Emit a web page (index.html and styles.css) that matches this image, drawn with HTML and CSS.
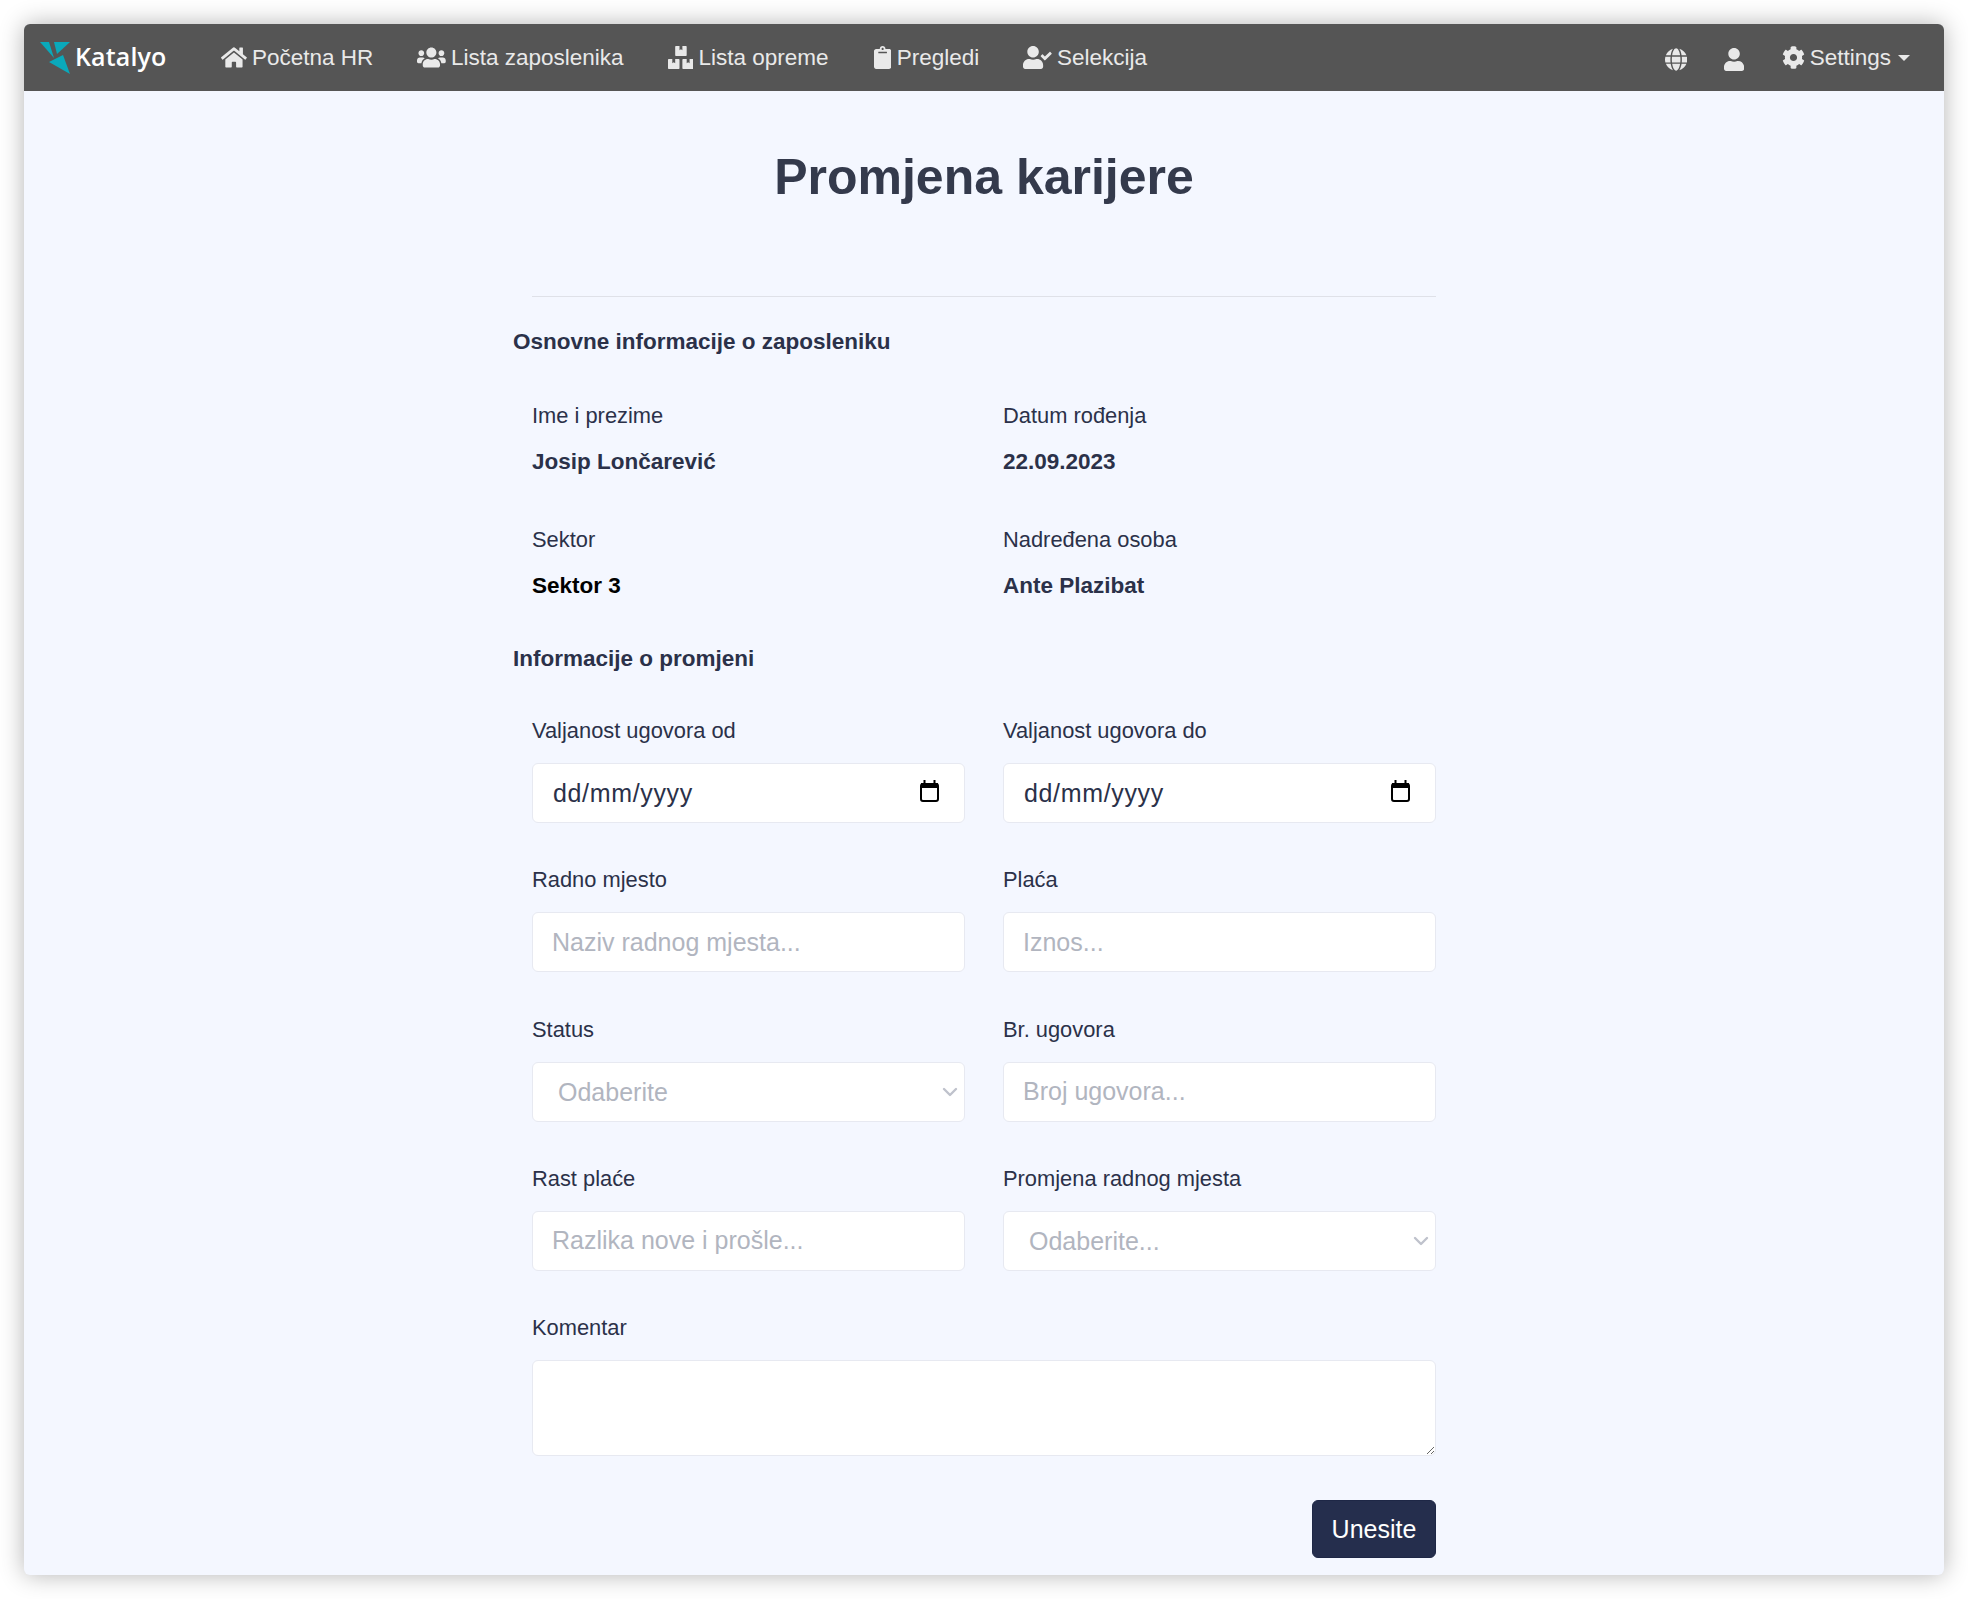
FILE: index.html
```html
<!DOCTYPE html>
<html lang="hr">
<head>
<meta charset="utf-8">
<title>Promjena karijere</title>
<link rel="stylesheet" href="styles.css">
</head>
<body>
<div class="window">
  <nav class="navbar">
    <a class="brand">
      <svg class="logo" viewBox="0 0 32 32"><polygon class="logo-fill" points="0,0 9,0 14,16"/><polygon class="logo-fill" points="14,0 30,0 17,12"/><polygon class="logo-fill" points="9,20 23,13 30,32"/></svg>
      <span class="brand-name">Katalyo</span>
    </a>
    <div class="nav-links">
      <a class="nav-link"><svg class="ico" viewBox="0 0 576 512"><path d="M280.37 148.26L96 300.11V464a16 16 0 0 0 16 16l112.06-.29a16 16 0 0 0 15.92-16V368a16 16 0 0 1 16-16h64a16 16 0 0 1 16 16v95.64a16 16 0 0 0 16 16.05L464 480a16 16 0 0 0 16-16V300L295.67 148.26a12.19 12.19 0 0 0-15.3 0zM571.6 251.47L488 182.56V44.05a12 12 0 0 0-12-12h-56a12 12 0 0 0-12 12v72.61L318.47 43a48 48 0 0 0-61 0L4.34 251.47a12 12 0 0 0-1.6 16.9l25.5 31A12 12 0 0 0 45.15 301l235.22-193.74a12.19 12.19 0 0 1 15.3 0L530.9 301a12 12 0 0 0 16.9-1.6l25.5-31a12 12 0 0 0-1.7-16.93z"/></svg>Početna HR</a>
      <a class="nav-link"><svg class="ico" viewBox="0 0 640 512"><path d="M96 224c35.3 0 64-28.7 64-64s-28.7-64-64-64-64 28.7-64 64 28.7 64 64 64zm448 0c35.3 0 64-28.7 64-64s-28.7-64-64-64-64 28.7-64 64 28.7 64 64 64zm32 32h-64c-17.6 0-33.5 7.1-45.1 18.6 40.3 22.1 68.9 62 75.1 109.4h66c17.7 0 32-14.3 32-32v-32c0-35.3-28.7-64-64-64zm-256 0c61.9 0 112-50.1 112-112S381.9 32 320 32 208 82.1 208 144s50.1 112 112 112zm76.8 32h-8.3c-20.8 10-43.9 16-68.5 16s-47.6-6-68.5-16h-8.3C179.6 288 128 339.6 128 403.2V432c0 26.5 21.5 48 48 48h288c26.5 0 48-21.5 48-48v-28.8c0-63.6-51.6-115.2-115.2-115.2zm-223.7-13.4C161.5 263.1 145.6 256 128 256H64c-35.3 0-64 28.7-64 64v32c0 17.7 14.3 32 32 32h65.9c6.3-47.4 34.9-87.3 75.2-109.4z"/></svg>Lista zaposlenika</a>
      <a class="nav-link"><svg class="ico" viewBox="0 0 576 512"><path d="M560 288h-80v96l-32-21.3-32 21.3v-96h-80c-8.8 0-16 7.2-16 16v192c0 8.8 7.2 16 16 16h224c8.8 0 16-7.2 16-16V304c0-8.8-7.2-16-16-16zm-384-64h224c8.8 0 16-7.2 16-16V16c0-8.8-7.2-16-16-16h-80v96l-32-21.3L256 96V0h-80c-8.8 0-16 7.2-16 16v192c0 8.8 7.2 16 16 16zm64 64h-80v96l-32-21.3L96 384v-96H16c-8.8 0-16 7.2-16 16v192c0 8.8 7.2 16 16 16h224c8.8 0 16-7.2 16-16V304c0-8.8-7.2-16-16-16z"/></svg>Lista opreme</a>
      <a class="nav-link"><svg class="ico ico-clip" viewBox="0 0 384 512"><path d="M384 112v352c0 26.51-21.49 48-48 48H48c-26.51 0-48-21.49-48-48V112c0-26.51 21.49-48 48-48h80c0-35.29 28.71-64 64-64s64 28.71 64 64h80c26.51 0 48 21.49 48 48zM192 40c-13.255 0-24 10.745-24 24s10.745 24 24 24 24-10.745 24-24-10.745-24-24-24m96 114v-20a6 6 0 0 0-6-6H102a6 6 0 0 0-6 6v20a6 6 0 0 0 6 6h180a6 6 0 0 0 6-6z"/></svg>Pregledi</a>
      <a class="nav-link"><svg class="ico" viewBox="0 0 640 512"><path d="M224 256c70.7 0 128-57.3 128-128S294.7 0 224 0 96 57.3 96 128s57.3 128 128 128zm89.6 32h-16.7c-22.2 10.2-46.9 16-72.9 16s-50.6-5.8-72.9-16h-16.7C60.2 288 0 348.2 0 422.4V464c0 26.5 21.5 48 48 48h352c26.5 0 48-21.5 48-48v-41.6c0-74.2-60.2-134.4-134.4-134.4zm323-128.4l-27.8-28.1c-4.6-4.7-12.1-4.7-16.8-.1l-104.8 104-45.5-45.8c-4.6-4.7-12.1-4.7-16.8-.1l-28.1 27.9c-4.7 4.6-4.7 12.1-.1 16.8l81.7 82.3c4.6 4.7 12.1 4.7 16.8.1l141.3-140.2c4.6-4.7 4.7-12.2.1-16.8z"/></svg>Selekcija</a>
    </div>
    <div class="nav-right">
      <a class="nav-icon"><svg class="ico-plain" viewBox="0 0 496 512"><path d="M336.5 160C322 70.7 287.8 8 248 8s-74 62.7-88.5 152h177zM152 256c0 22.2 1.2 43.5 3.3 64h185.3c2.1-20.5 3.3-41.8 3.3-64s-1.2-43.5-3.3-64H155.3c-2.1 20.5-3.3 41.8-3.3 64zm324.7-96c-28.6-67.9-86.5-120.4-158-141.6 24.4 33.8 41.2 84.7 50 141.6h108zM177.2 18.4C105.8 39.6 47.8 92.1 19.3 160h108c8.7-56.9 25.5-107.8 49.9-141.6zM487.4 192H372.7c2.1 21 3.3 42.5 3.3 64s-1.2 43-3.3 64h114.6c5.5-20.5 8.6-41.8 8.6-64s-3.1-43.5-8.5-64zM120 256c0-21.5 1.2-43 3.3-64H8.6C3.2 212.5 0 233.8 0 256s3.2 43.5 8.6 64h114.6c-2-21-3.2-42.5-3.2-64zm39.5 96c14.5 89.3 48.7 152 88.5 152s74-62.7 88.5-152h-177zm159.3 141.6c71.4-21.2 129.4-73.7 158-141.6h-108c-8.8 56.9-25.6 107.8-50 141.6zM19.3 352c28.6 67.9 86.5 120.4 158 141.6-24.4-33.8-41.2-84.7-50-141.6h-108z"/></svg></a>
      <a class="nav-icon"><svg class="ico-plain" viewBox="0 0 448 512"><path d="M224 256c70.7 0 128-57.3 128-128S294.7 0 224 0 96 57.3 96 128s57.3 128 128 128zm89.6 32h-16.7c-22.2 10.2-46.9 16-72.9 16s-50.6-5.8-72.9-16h-16.7C60.2 288 0 348.2 0 422.4V464c0 26.5 21.5 48 48 48h352c26.5 0 48-21.5 48-48v-41.6c0-74.2-60.2-134.4-134.4-134.4z"/></svg></a>
      <a class="nav-link settings"><svg class="ico" viewBox="0 0 512 512"><path d="M487.4 315.7l-42.6-24.6c4.3-23.2 4.3-47 0-70.2l42.6-24.6c4.9-2.8 7.1-8.6 5.5-14-11.1-35.6-30-67.8-54.7-94.6-3.8-4.1-10-5.1-14.8-2.3L380.8 110c-17.9-15.4-38.5-27.3-60.8-35.1V25.8c0-5.6-3.9-10.5-9.4-11.7-36.7-8.2-74.3-7.8-109.2 0-5.5 1.2-9.4 6.1-9.4 11.7V75c-22.2 7.9-42.8 19.8-60.8 35.1L88.7 85.5c-4.9-2.8-11-1.9-14.8 2.3-24.7 26.7-43.6 58.9-54.7 94.6-1.7 5.4.6 11.2 5.5 14L67.3 221c-4.3 23.2-4.3 47 0 70.2l-42.6 24.6c-4.9 2.8-7.1 8.6-5.5 14 11.1 35.6 30 67.8 54.7 94.6 3.8 4.1 10 5.1 14.8 2.3l42.6-24.6c17.9 15.4 38.5 27.3 60.8 35.1v49.2c0 5.6 3.9 10.5 9.4 11.7 36.7 8.2 74.3 7.8 109.2 0 5.5-1.2 9.4-6.1 9.4-11.7v-49.2c22.2-7.9 42.8-19.8 60.8-35.1l42.6 24.6c4.9 2.8 11 1.9 14.8-2.3 24.7-26.7 43.6-58.9 54.7-94.6 1.5-5.5-.7-11.3-5.6-14.1zM256 336c-44.1 0-80-35.9-80-80s35.9-80 80-80 80 35.9 80 80-35.9 80-80 80z"/></svg>Settings<span class="caret"></span></a>
    </div>
  </nav>
  <main class="content">
    <h1 class="title">Promjena karijere</h1>
    <hr class="rule">
    <h2 class="section section-first">Osnovne informacije o zaposleniku</h2>
    <div class="info-grid">
      <div class="info"><div class="label">Ime i prezime</div><div class="value">Josip Lončarević</div></div>
      <div class="info"><div class="label">Datum rođenja</div><div class="value">22.09.2023</div></div>
      <div class="info"><div class="label">Sektor</div><div class="value value-black">Sektor 3</div></div>
      <div class="info"><div class="label">Nadređena osoba</div><div class="value">Ante Plazibat</div></div>
    </div>
    <h2 class="section section-second">Informacije o promjeni</h2>
    <form class="form-grid">
      <div class="field"><label class="label field-label">Valjanost ugovora od</label><div class="date-wrap"><input class="control date" type="text" value="dd/mm/yyyy"><svg class="cal" viewBox="0 0 19 22"><rect class="cal-frame" x="1" y="4" width="17" height="17" rx="2"/><path d="M1 3h17v5H1zM3.5 0h2v4h-2zM13.5 0h2v4h-2z"/></svg></div></div>
      <div class="field"><label class="label field-label">Valjanost ugovora do</label><div class="date-wrap"><input class="control date" type="text" value="dd/mm/yyyy"><svg class="cal" viewBox="0 0 19 22"><rect class="cal-frame" x="1" y="4" width="17" height="17" rx="2"/><path d="M1 3h17v5H1zM3.5 0h2v4h-2zM13.5 0h2v4h-2z"/></svg></div></div>
      <div class="field"><label class="label field-label">Radno mjesto</label><input class="control" placeholder="Naziv radnog mjesta..."></div>
      <div class="field"><label class="label field-label">Plaća</label><input class="control" placeholder="Iznos..."></div>
      <div class="field"><label class="label field-label">Status</label><select class="control select"><option>Odaberite</option></select></div>
      <div class="field"><label class="label field-label">Br. ugovora</label><input class="control" placeholder="Broj ugovora..."></div>
      <div class="field"><label class="label field-label">Rast plaće</label><input class="control" placeholder="Razlika nove i prošle..."></div>
      <div class="field"><label class="label field-label">Promjena radnog mjesta</label><select class="control select"><option>Odaberite...</option></select></div>
      <div class="field field-wide"><label class="label field-label">Komentar</label><textarea class="control area"></textarea></div>
      <div class="actions"><button class="btn" type="button">Unesite</button></div>
    </form>
  </main>
</div>
</body>
</html>
```
FILE: styles.css
```css
* { box-sizing: border-box; }
html, body { margin: 0; height: 100%; background: #fff; }
body { padding: 24px; font-family: "Liberation Sans", Arial, sans-serif; color: #2b3149; }
.window { height: 1551px; border-radius: 6px; background: #f4f7ff; box-shadow: 0 0 24px rgba(0,0,0,.3); overflow: hidden; display: flex; flex-direction: column; }
.navbar { height: 67px; flex: none; background: #555; display: flex; align-items: center; color: #e9e9e9; padding: 0 34px 0 16px; }
.brand { display: flex; align-items: center; width: 181px; color: #fff; font-family: "Open Sans", sans-serif; font-weight: 600; font-size: 25px; letter-spacing: .15px; gap: 3px; }
.brand-name { margin-top: -3px; }
.logo { width: 32px; height: 32px; flex: none; }
.logo-fill { fill: #0aa9bb; }
.nav-links { display: flex; gap: 44px; flex: 1; }
.nav-link { display: flex; align-items: center; font-size: 22.5px; white-space: nowrap; }
.ico { height: 23px; width: auto; fill: currentColor; margin-right: 5px; flex: none; }
.ico-clip { margin-left: 1px; margin-right: 6px; }
.nav-right { display: flex; align-items: center; }
.nav-icon { display: flex; width: 58px; justify-content: center; margin-top: 3px; }
.ico-plain { height: 23px; width: auto; fill: currentColor; }
.settings { margin-left: 19px; }
.caret { width: 0; height: 0; margin-left: 7px; border-top: 6px solid currentColor; border-left: 6px solid transparent; border-right: 6px solid transparent; }
.content { flex: 1; width: 944px; margin: 0 auto; padding: 0 20px; }
.title { margin: 0; padding-top: 56px; line-height: 60px; font-size: 50px; font-weight: 700; text-align: center; color: #343a4c; }
.rule { margin: 89px 0 0; border: 0; border-top: 1px solid #dfe1e8; }
.section { margin: 0 0 0 -19px; font-size: 22.5px; line-height: 28px; font-weight: 700; color: #2b3149; }
.section-first { margin-top: 31px; }
.section-second { margin-top: 44px; }
.info-grid { display: grid; grid-template-columns: 433px 433px; column-gap: 38px; margin-top: 45px; row-gap: 48px; }
.label { font-size: 21.875px; line-height: 30px; display: block; }
.value { margin-top: 16px; font-size: 22.5px; line-height: 30px; font-weight: 700; color: #2b3149; }
.value-black { color: #000; }
.form-grid { display: grid; grid-template-columns: 433px 433px; column-gap: 38px; row-gap: 42.25px; margin-top: 43px; }
.field-label { margin-bottom: 17px; }
.field-wide { grid-column: 1 / -1; }
.date-wrap { position: relative; }
.cal { position: absolute; top: 17px; right: 26px; width: 19px; height: 22px; fill: #000; }
.cal-frame { fill: none; stroke: #000; stroke-width: 2; }
.control { display: block; width: 100%; height: 60px; padding: 0 19px; border: 1px solid #e7e9f1; border-radius: 6px; background: #fff; font-family: inherit; font-size: 25px; color: #2b3149; outline: 0; }
.control::placeholder { color: #b1b5bf; opacity: 1; }
.date { padding-left: 20px; letter-spacing: .65px; }
.select { appearance: none; color: #b1b5bf; padding-left: 25px; background-image: url("data:image/svg+xml,%3csvg xmlns='http://www.w3.org/2000/svg' viewBox='0 0 16 16'%3e%3cpath fill='none' stroke='%23bfc2cc' stroke-linecap='round' stroke-linejoin='round' stroke-width='2.4' d='M2 5l6 6 6-6'/%3e%3c/svg%3e"); background-repeat: no-repeat; background-position: right 6px center; background-size: 16px; }
.area { height: 96px; padding: 10px 20px; resize: vertical; }
.actions { grid-column: 1 / -1; display: flex; justify-content: flex-end; margin-top: 2px; }
.btn { width: 124px; height: 58px; padding: 0; border: 1px solid #1e2746; border-radius: 6px; background: #252e4d; color: #fff; font-family: inherit; font-size: 25px; }
```
